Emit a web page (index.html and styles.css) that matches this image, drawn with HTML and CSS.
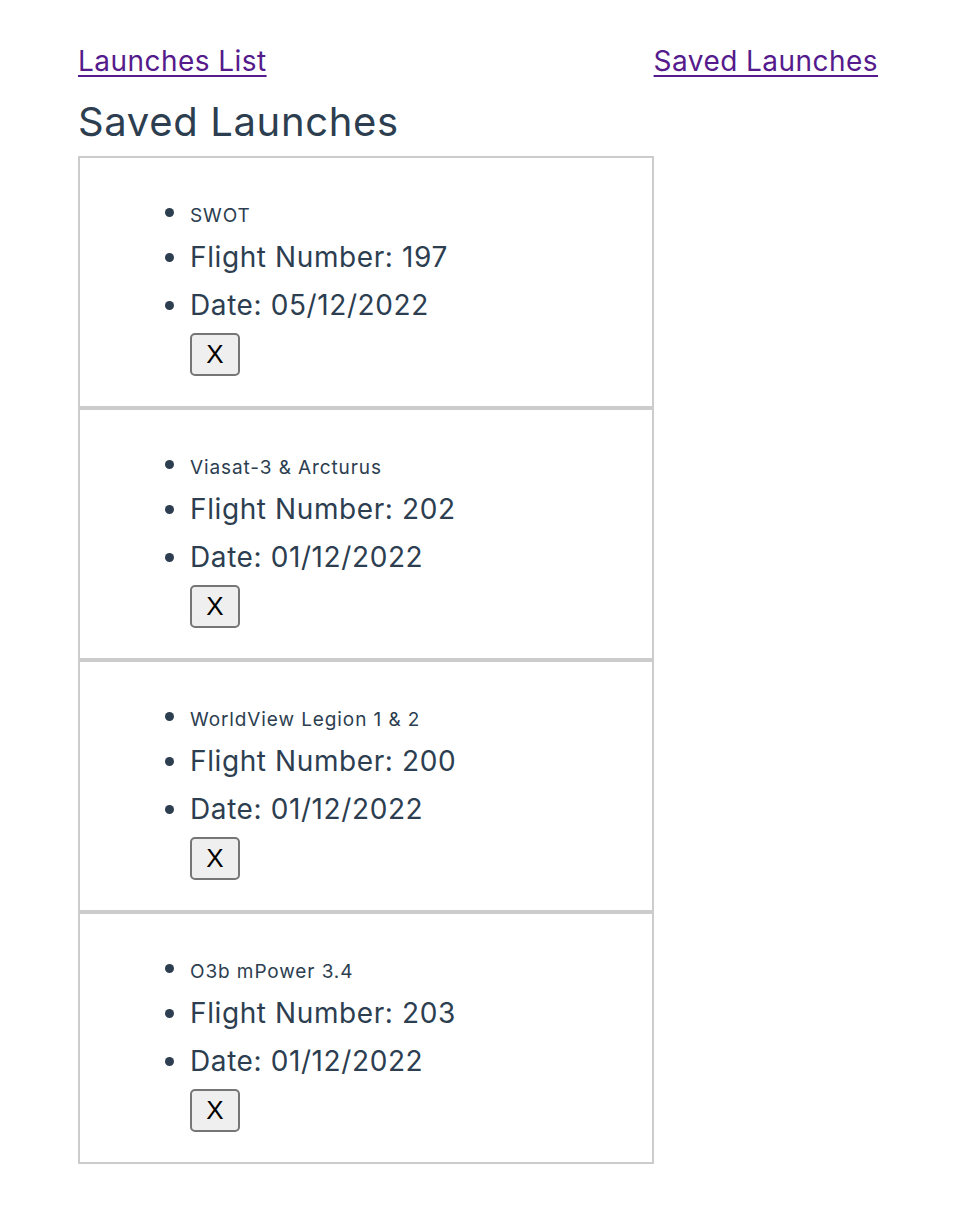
FILE: index.html
```html
<!DOCTYPE html>
<html>
<head>
<meta charset="utf-8">
<link rel="stylesheet" href="styles.css">
</head>
<body>
<div class="app">
  <nav class="nav">
    <a href="#" class="nav-link">Launches List</a>
    <a href="#" class="nav-link">Saved Launches</a>
  </nav>
  <h1 class="title">Saved Launches</h1>
  <div class="cards">
    <div class="card">
      <ul class="info">
        <li class="name">SWOT</li>
        <li>Flight Number: 197</li>
        <li>Date: 05/12/2022</li>
      </ul>
      <button class="remove">X</button>
    </div>
    <div class="card">
      <ul class="info">
        <li class="name">Viasat-3 &amp; Arcturus</li>
        <li>Flight Number: 202</li>
        <li>Date: 01/12/2022</li>
      </ul>
      <button class="remove">X</button>
    </div>
    <div class="card">
      <ul class="info">
        <li class="name">WorldView Legion 1 &amp; 2</li>
        <li>Flight Number: 200</li>
        <li>Date: 01/12/2022</li>
      </ul>
      <button class="remove">X</button>
    </div>
    <div class="card">
      <ul class="info">
        <li class="name">O3b mPower 3.4</li>
        <li>Flight Number: 203</li>
        <li>Date: 01/12/2022</li>
      </ul>
      <button class="remove">X</button>
    </div>
  </div>
</div>
</body>
</html>
```

FILE: styles.css
```css
html, body {
  margin: 0;
  padding: 0;
  background: #ffffff;
}

body {
  font-family: Inter, "Noto Sans", sans-serif;
  color: #2c3e50;
}

.app {
  width: 800px;
  padding: 41px 0 0 78px;
}

.nav {
  display: flex;
  justify-content: space-between;
  height: 40px;
  align-items: center;
}

.nav-link {
  font-size: 28px;
  line-height: 40px;
  letter-spacing: 0.45px;
  color: #551a8b;
  text-decoration: underline;
  text-underline-offset: 4px;
}

.title {
  margin: 17px 0 10px;
  font-size: 40px;
  font-weight: 400;
  line-height: 48px;
  letter-spacing: 0.65px;
}

.cards {
  width: 576px;
}

.card {
  border: 2px solid #cccccc;
  padding: 41px 0 30px 110px;
}

.info {
  margin: 0;
  padding: 0;
  list-style: disc;
}

.info li {
  font-size: 28px;
  line-height: 48px;
  letter-spacing: 0.6px;
}

.info li.name {
  font-size: 19px;
  line-height: 27px;
  height: 34px;
  letter-spacing: 0.9px;
}

.info li.name::marker {
  font-size: 28px;
}

.remove {
  margin-top: 4px;
  width: 50px;
  height: 43px;
  padding: 0;
  font-family: "Liberation Sans", Arial, sans-serif;
  font-size: 26px;
  color: #000;
  background: #efefef;
  border: 2px solid #767676;
  border-radius: 5px;
  display: block;
}
```
